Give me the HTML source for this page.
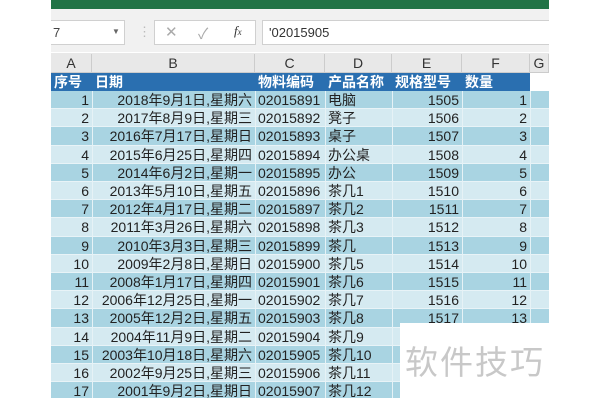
<!DOCTYPE html>
<html><head><meta charset="utf-8"><style>
*{margin:0;padding:0;box-sizing:border-box}
body{width:600px;height:400px;background:#fff;position:relative;overflow:hidden;font-family:"Liberation Sans","Noto Sans CJK SC",sans-serif;color:#222}
.a{position:absolute}
.c{position:absolute;height:18px;line-height:18px;font-size:14px;white-space:nowrap;overflow:hidden;padding:0 3px}
.r{text-align:right}
</style></head><body>
<div class="a" style="left:51px;top:0;width:498px;height:9px;background:#217346"></div>
<div class="a" style="left:51px;top:9px;width:498px;height:43px;background:#f1f1f1"></div>
<div class="a" style="left:51px;top:20px;width:74px;height:25px;background:#fff;border:1px solid #d0d0d0;border-left:none;font-size:13px;line-height:23px;padding-left:2px;color:#444">7</div>
<div class="a" style="left:112px;top:27px;font-size:8px;color:#666">▼</div>
<div class="a" style="left:138px;top:24px;font-size:13px;color:#bbb">⋮</div>
<div class="a" style="left:154px;top:20px;width:102px;height:25px;background:#fff;border:1px solid #d0d0d0"></div>
<div class="a" style="left:165px;top:23px;font-size:15px;color:#aaa">✕</div>
<div class="a" style="left:198px;top:23px;font-size:15px;color:#aaa">✓</div>
<div class="a" style="left:234px;top:23px;font-size:13px;color:#333;font-style:italic;font-family:'Liberation Serif',serif">f<span style="font-size:9px">x</span></div>
<div class="a" style="left:262px;top:20px;width:287px;height:25px;background:#fff;border:1px solid #d0d0d0;border-right:none;font-size:13px;line-height:23px;padding-left:6px;color:#333">'02015905</div>
<div class="a" style="left:51px;top:53px;width:498px;height:20px;background:#e8e8e8;border-bottom:1px solid #ccc"></div>
<div id="g"></div>
<div class="a" style="left:400px;top:323px;width:200px;height:77px;background:#fff"></div>
<div class="a" style="left:405px;top:336px;font-size:33px;color:#c8c8c8;font-family:'Noto Sans CJK SC',sans-serif;letter-spacing:2px">软件技巧</div>
<script>
var cols=[[51,41],[92,163],[255,70],[325,67],[392,70],[462,68],[530,19]];
var L="ABCDEFG",h='';
cols.forEach(function(c,i){h+='<div class="c" style="left:'+c[0]+'px;top:54px;width:'+c[1]+'px;text-align:center;font-size:14px;color:#333;border-right:1px solid #ccc">'+L[i]+'</div>';});
h+='<div class="a" style="left:51px;top:73px;width:479px;height:18px;background:#2a6fb0"></div>';
var hd=["序号","日期","物料编码","产品名称","规格型号","数量"];
hd.forEach(function(t,i){h+='<div class="c" style="left:'+cols[i][0]+'px;top:73px;width:'+cols[i][1]+'px;color:#fff;font-weight:bold">'+t+'</div>';});
var d=["2018年9月1日,星期六","2017年8月9日,星期三","2016年7月17日,星期日","2015年6月25日,星期四","2014年6月2日,星期一","2013年5月10日,星期五","2012年4月17日,星期二","2011年3月26日,星期六","2010年3月3日,星期三","2009年2月8日,星期日","2008年1月17日,星期四","2006年12月25日,星期一","2005年12月2日,星期五","2004年11月9日,星期二","2003年10月18日,星期六","2002年9月25日,星期三","2001年9月2日,星期日"];
var p=["电脑","凳子","桌子","办公桌","办公","茶几1","茶几2","茶几3","茶几","茶几5","茶几6","茶几7","茶几8","茶几9","茶几10","茶几11","茶几12"];
for(var i=0;i<17;i++){
 var y=91+i*18.2,bg=i%2==0?'#a9d4e2':'#d5eaf1';
 h+='<div class="a" style="left:51px;top:'+y+'px;width:498px;height:18.2px;background:'+bg+';border-bottom:1px solid #e8f3f7"></div>';
 for(var k=1;k<7;k++)h+='<div class="a" style="left:'+cols[k][0]+'px;top:'+y+'px;width:1px;height:18.2px;background:#e6f2f6"></div>';
 var v=[i+1,d[i],'020158'+(91+i),p[i],1505+i,i+1];
 if(i>=9)v[2]='020159'+('0'+(i-9)).slice(-2);
 var al=['r','r','','','r','r'];
 v.forEach(function(t,k){h+='<div class="c '+al[k]+'" style="left:'+cols[k][0]+'px;top:'+y+'px;width:'+cols[k][1]+'px">'+t+'</div>';});
}
h+='<div class="a" style="left:51px;top:398px;width:498px;height:2px;background:#fff"></div>';
document.getElementById('g').outerHTML=h;
</script>
</body></html>
